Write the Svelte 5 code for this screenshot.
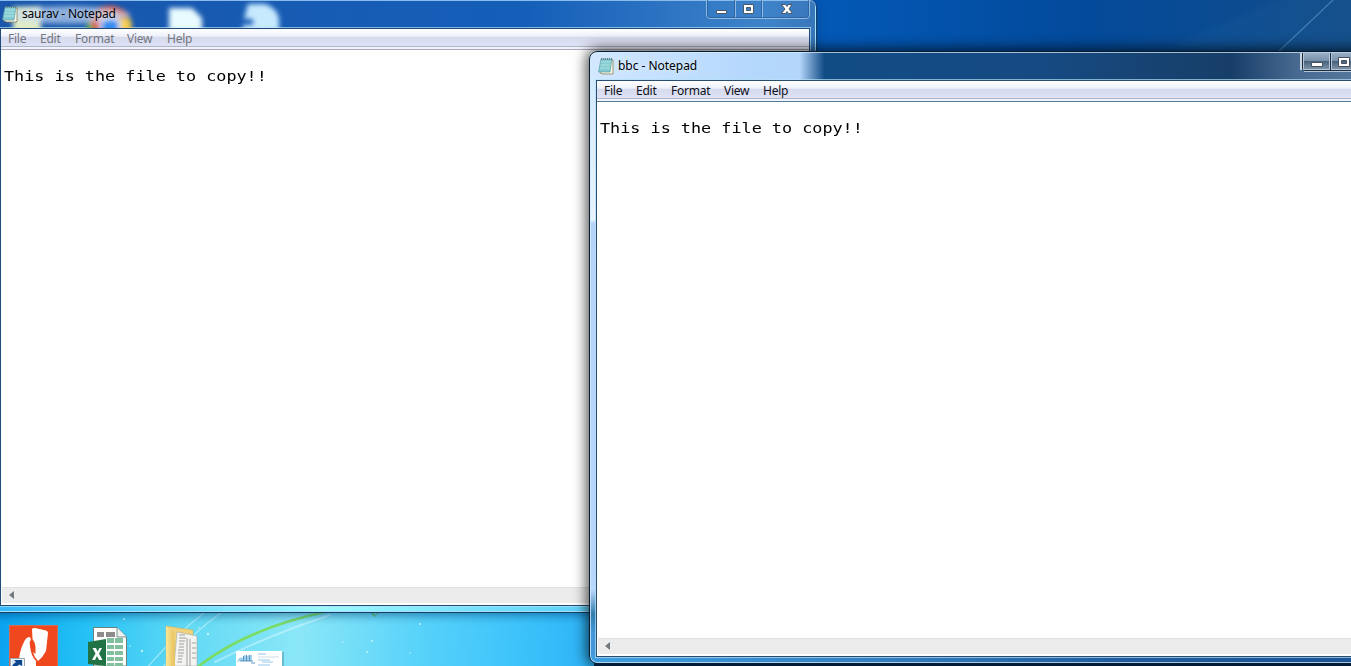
<script>
  const menus = ['File', 'Edit', 'Format', 'View', 'Help'];
  const windows = [
    { id: 'saurav', title: 'saurav - Notepad', text: 'This is the file to copy!!' },
    { id: 'bbc', title: 'bbc - Notepad', text: 'This is the file to copy!!' }
  ];
</script>

<main class="desktop">
  <svg class="wallpaper" width="1351" height="666" viewBox="0 0 1351 666">
    <defs>
      <linearGradient id="top" x1="0" x2="1"><stop offset="0" stop-color="#0b5bbd" /><stop offset=".62" stop-color="#0358b5" /><stop offset=".8" stop-color="#034a9b" /><stop offset="1" stop-color="#124c88" /></linearGradient>
      <linearGradient id="low" gradientUnits="userSpaceOnUse" x1="0" y1="650" x2="620" y2="690"><stop offset="0" stop-color="#0ba3f0" /><stop offset=".13" stop-color="#22c0f5" /><stop offset=".3" stop-color="#62daf5" /><stop offset=".48" stop-color="#8be7f7" /><stop offset=".68" stop-color="#56d2fa" /><stop offset=".87" stop-color="#37bffa" /><stop offset="1" stop-color="#27a9f2" /></linearGradient>
      <linearGradient id="folder"><stop stop-color="#f9e79a" /><stop offset="1" stop-color="#e8bf59" /></linearGradient>
      <filter id="soft"><feGaussianBlur stdDeviation="3" /></filter>
    </defs>
    <rect width="1351" height="600" fill="url(#top)" />
    <path d="M1150 55 1290-5H1355V55Z" fill="#4a8fc0" opacity=".07" filter="url(#soft)" />
    <path d="M1278 52Q1308 24 1335-2" fill="none" stroke="#6aa8d4" stroke-width="1.3" opacity=".5" />
    <rect y="600" width="650" height="66" fill="url(#low)" />
    <rect x="594" y="660" width="757" height="6" fill="#082f5c" />
    <g fill="none" stroke="#d8faff" stroke-linecap="round">
      <path d="M145 670Q173 637 205 612M162 668Q190 635 222 612" stroke-width="1.2" opacity=".55" />
      <path d="M215 662Q267 636 330 615" stroke-width="2" opacity=".5" />
      <path d="M195 669Q245 629 325 612" stroke="#7bdc64" stroke-width="2.6" />
      <path d="M370 611 375 616M378 611 377 614" stroke="#69b957" stroke-width="1.5" />
    </g>
    <g fill="#d9faff" opacity=".8"><circle cx="124" cy="619" r="1" /><circle cx="142" cy="651" r="1.2" /><circle cx="130" cy="646" r=".8" /><circle cx="208" cy="634" r="1.2" /><circle cx="199" cy="628" r=".8" /><circle cx="420" cy="624" r="1" /><circle cx="372" cy="641" r="1" /><circle cx="367" cy="652" r="1" /><circle cx="410" cy="653" r=".8" /><circle cx="343" cy="642" r=".8" /></g>

    <g>
      <path d="M9 625H58V666H9Z" fill="#ef481f" />
      <path d="M9.500 666V625.500H57.500V666" fill="none" stroke="#d96b50" />
      <path d="M32 629Q33 627.500 35 628L46 630.500Q48 631 48 633L46 651Q43 657 38 661Q34 657 33 652L35.500 654V647Q35 642 32.500 639Z" fill="#fff" />
      <path d="M18.500 666Q19 651 24 642Q26 637 30 637L31 640Q29 641 30 646Q31 656 36 661V666Z" fill="#fff" />
      <path d="M10.500 666V658.500H24.500V666" fill="#f1f6fa" stroke="#9aa4af" />
      <path d="M12 660H23V666H12Z" fill="#d4e5f2" />
      <path d="M14 660H22V666L19.500 664.500 17 666H12Q13 664 16 662Z" fill="#0b458d" />
    </g>
    <g>
      <path d="M93.500 666V627.500H117L126.500 637V666Z" fill="#fff" stroke="#6c817c" />
      <path d="M117 627.500V637H126.500" fill="#edf2ef" stroke="#7b8d87" />
      <path d="M97 632H104V637H97ZM106 632H115V637H106Z" fill="#8d8b8b" />
      <path d="M107 638H114V643H107ZM115 638H123V643H115ZM107 645H114V649H107ZM115 645H123V649H115ZM107 651H114V655H107ZM115 651H123V655H115ZM107 657H114V661H107ZM115 657H123V661H115ZM107 663H114V666H107ZM115 663H123V666H115Z" fill="#82bf9c" />
      <path d="M88 642 106 639V666L88 664Z" fill="#217346" />
      <path d="M92.500 648H96L97.500 651.500 99.500 648H102L99 653.500 102.500 660H99L97 656 95 660H92L95.500 653.500Z" fill="#fff" />
    </g>
    <g>
      <path d="M166 626 193 630V666H166Z" fill="#efd27a" stroke="#c7ae62" stroke-width=".5" />
      <path d="M177 632 197 636V666H174Z" fill="#f3f3f0" stroke="#a6a8a5" stroke-width=".6" />
      <path d="M179 635H185M179 638H186M179 641H185M179 644H184M179 647H184M178 650H184M178 653H184M178 656H183M178 659H182M177 662H182M190 639V666M192 643H196M192 648H196M192 653H196M192 658H196M187 638V666" stroke="#7d8080" stroke-width=".7" />
      <path d="M166 626 174 632 175 666H166Z" fill="url(#folder)" />
    </g>
    <g>
      <path d="M237 652H284V666H237Z" fill="#4c91a8" opacity=".5" /><path d="M236 651H282V666H236Z" fill="#fff" />
      <path d="M237 662Q239 656 243 658L244 655 248 656 249 655H252V661H240Z" fill="#a3cfeb" />
      <path d="M243.500 656V661M246.500 655V661M249.500 655V661M240 661H253M251 663H255" stroke="#4c8dba" stroke-width=".9" />
      <path d="M258 654H266M258 660H270M262 662H273M258 665H270" stroke="#79b7e5" stroke-width=".8" /><path d="M258 657H279" stroke="#b8cddd" stroke-width=".7" />
    </g>
  </svg>

  {#each windows as win}
    <section class="window {win.id}">
      {#if win.id === 'saurav'}
        <svg class="behind" width="320" height="27" viewBox="0 0 320 27">
          <filter id="glass" x="-20%" y="-30%" width="140%" height="160%"><feGaussianBlur stdDeviation="2.6" /></filter>
          <g filter="url(#glass)">
            <rect x="13" y="6" width="28" height="25" fill="#e4edc4" />
            <circle cx="110" cy="26" r="21" fill="#db4c3d" /><path d="M88 18Q92 26 96 31H86Z" fill="#5bb05b" /><path d="M114 17H130Q133 24 131 31H117Z" fill="#f4cd4d" /><circle cx="110" cy="25" r="10" fill="#368bf0" stroke="#eaf2fa" stroke-width="2" />
            <path d="M169 7H192L202 17V30H169Z" fill="#e9fbff" /><path d="M248 3H265Q279 8 279 20V30H243V24H253V18H244Z" fill="#c7eaff" />
          </g>
          <ellipse cx="68" cy="14" rx="62" ry="9" fill="#c4daf3" opacity=".65" filter="url(#glass)" />
        </svg>
      {/if}
      <header>
        <svg class="notepad" width="16" height="18" viewBox="0 0 16 18">
          <path d="M4 3H15V17H5L2 16Z" fill="#f6f5e8" stroke="#8b8058" stroke-width=".8" />
          <path d="M3 2H14L12 15H.5Z" fill="#83cbd1" stroke="#56959f" stroke-width=".6" />
          <path d="M3 5H13M2.500 8H12.500M2 11H12" stroke="#b5e8e8" stroke-width=".8" />
          <path d="M3.500 1V3M5.500 1V3M7.500 1V3M9.500 1V3M11.500 1V3M13.500 1V3" stroke="#5b7b82" stroke-width=".8" />
        </svg>
        <h1>{win.title}</h1>
        <div class="controls">
          <svg width="105" height="20" viewBox="0 0 105 20">
            {#if win.id === 'saurav'}
              <path d="M.5 0V15Q.5 18.500 4 18.500H100Q103.500 18.500 103.500 15V0M29.500 0V18M56.500 0V18" fill="none" stroke="#92b9df" />
              <path d="M1.500 0V15Q1.500 17.500 4 17.500H100Q102.500 17.500 102.500 15V0M28.500 0V17M55.500 0V17" fill="none" stroke="#245b97" opacity=".65" />
              <path d="M10.500 10.500H20.500V13.500H10.500Z" fill="#fff" stroke="#4a5869" />
              <path d="M37.500 4.500H47.500V13.500H37.500ZM40.500 7.500H44.500V10.500H40.500Z" fill="#fff" fill-rule="evenodd" stroke="#4a5869" />
              <path d="M75.500 4.500H79.500L81 6.500 82.500 4.500H86L83 9 86.500 13.500H82.500L81 11.500 79.500 13.500H75.500L79 9Z" fill="#fff" stroke="#4a5869" />
            {:else}
              <defs><linearGradient id="btn" x2="0" y2="1"><stop stop-color="#9bb0c6" /><stop offset=".45" stop-color="#7890ab" /><stop offset=".5" stop-color="#49647f" /><stop offset="1" stop-color="#8298ac" /></linearGradient></defs>
              <path d="M1 0H105V17H4L1 14Z" fill="url(#btn)" /><path d="M1 0V17" stroke="#c9d3df" stroke-width="2" />
              <path d="M2.500 0V15Q3 17.500 5 17.500H105M30.500 0V17" fill="none" stroke="#182e46" />
              <path d="M3.500 0V16.500H29.500V0M31.500 0V16.500H105M4 18.500H105" fill="none" stroke="#b6c4d3" />
              <path d="M11.500 9.500H22.500V13.500H11.500Z" fill="#fff" stroke="#48515d" />
              <path d="M38.500 4.500H49.500V13.500H38.500ZM41.500 7.500H46.500V10.500H41.500Z" fill="#fff" fill-rule="evenodd" stroke="#48515d" />
            {/if}
          </svg>
        </div>
      </header>
      <div class="client">
        <nav>{#each menus as item}<span class={item.toLowerCase()}>{item}</span>{/each}</nav>
        <div class="document"><p>{win.text}</p></div>
        <div class="scrollbar"><svg width="5" height="8" viewBox="0 0 5 8"><path d="M5 0V8L0 4Z" fill="#747b80" /></svg></div>
      </div>
    </section>
  {/each}
</main>

<style>
  :global(body) { margin: 0; overflow: hidden; }
  .desktop { position: relative; width: 1351px; height: 666px; overflow: hidden; font-family: "Noto Sans", "Open Sans", sans-serif; }
  .wallpaper { display: block; }
  .window { position: absolute; box-sizing: border-box; display: flex; flex-direction: column; }
  .saurav { left: -7px; top: 0; width: 824px; height: 613px; padding: 0 6px 6px; border: 1px solid #163e69; border-top: 0; border-radius: 0 7px 2px 2px; background: linear-gradient(90deg, #35b7fb, #9cf8fd 40%, #65d6fa 68%, #35a9ee) bottom / 100% 9px no-repeat, linear-gradient(90deg, #1956ac, #155fb9 65%, #3e83c9 94%, #3876b9); box-shadow: inset 0 1px #8abbed, inset -1px -1px #a4e4fa, 0 3px 8px #003d7480; }
  .bbc { left: 589px; top: 51px; width: 824px; height: 613px; padding: 1px 6px 6px; border: 1px solid #071c30; border-radius: 8px; background: linear-gradient(90deg, #d2e8ff, #b4d7fc 20%, #b4d6fb 25.5%, #124c85 28.5%, #164a82 55%, #173e68 78%, #486a91 86%, #6584a7) top / 100% 29px no-repeat, linear-gradient(90deg, #3f9fe0, #347fc1 35%, #205c9d 65%, #1a5193) bottom / 100% 8px no-repeat, linear-gradient(#d2e8ff, #e7f3ff 27.5%, #b4d5f8 28%, #b7d8fb 88%, #347eae 92%, #4497d8 95%); box-shadow: inset 0 0 0 1px #d6edffba, 0 0 14px 2px #000b; }
  .behind { position: absolute; left: 6px; top: 1px; }
  header { height: 28px; flex: none; display: flex; align-items: flex-start; position: relative; }
  .notepad { margin: 5px 0 0 2px; }
  .bbc .notepad { margin-top: 4px; }
  h1 { margin: 6px 0 0 4px; font-size: 12px; line-height: 16px; font-weight: 400; letter-spacing: -.18px; white-space: nowrap; color: #000; text-shadow: 0 0 6px #fff9; }
  .bbc h1 { margin-top: 5px; letter-spacing: -.03px; }
  .controls { margin-left: auto; margin-right: -1px; height: 20px; }
  .bbc .controls { margin-right: 1px; }
  .client { flex: 1; min-height: 0; display: flex; flex-direction: column; box-sizing: border-box; background: white; border: 1px solid #1e4b78; box-shadow: 0 0 0 1px #b2e0f7b0; }
  .bbc .client { border-color: #294d70; margin-top: -1px; }
  nav { height: 21px; flex: none; box-sizing: border-box; display: flex; align-items: center; padding-left: 7px; font-size: 12px; line-height: 16px; letter-spacing: -.25px; color: #747680; background: linear-gradient(#fff, #edf0fa 37%, #d5daed 39%, #dfe2f4 85%, #aeb6ca 86%, #aeb6ca 90%, #f2f3fa 91%); border-bottom: 1px solid #aaa9bd; }
  .bbc nav { color: #10111a; border-bottom-color: #527c9c; }
  nav span { width: 40px; }
  nav .file { width: 32px; }
  nav .edit { width: 35px; }
  nav .format { width: 52px; }
  .bbc nav .format { width: 53px; }
  .bbc nav .view { width: 39px; }
  .document { flex: 1; }
  p { margin: 16.500px 0 0 2.500px; font: 14.500px/18px "DejaVu Sans Mono", monospace; width: max-content; transform: scaleX(1.158); transform-origin: left; color: #000; }
  .scrollbar { height: 16px; flex: none; padding: 0 0 2px 7px; display: flex; align-items: center; box-sizing: border-box; border-top: 1px solid #e1e1e1; margin: 0 1px 2px; background: #ececec; }
</style>
